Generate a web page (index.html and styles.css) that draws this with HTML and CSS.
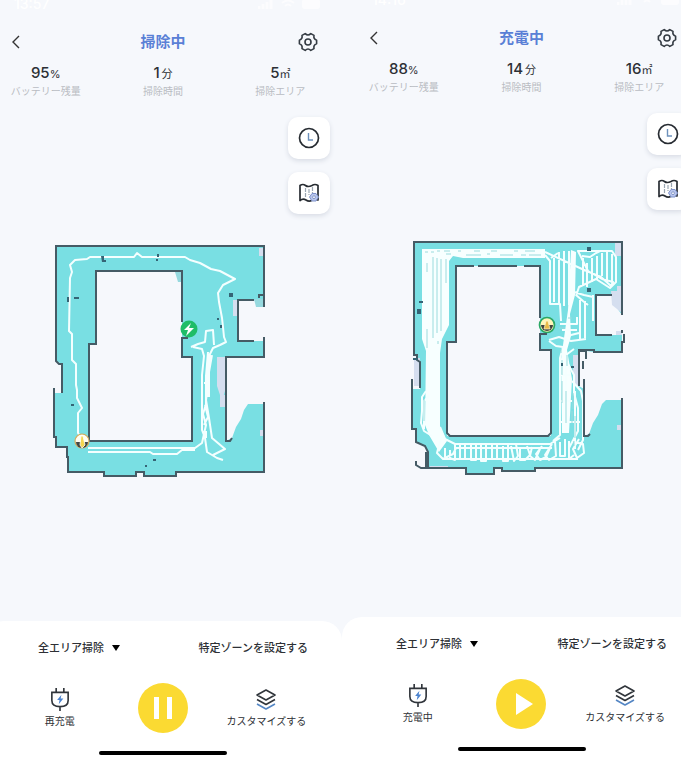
FILE: index.html
```html
<!DOCTYPE html>
<html lang="ja">
<head>
<meta charset="utf-8">
<meta name="viewport" content="width=device-width, initial-scale=1">
<title>ロボット掃除機</title>
<link rel="stylesheet" href="styles.css">
</head>
<body>
<svg class="sprite" aria-hidden="true">
  <symbol id="back" viewBox="0 0 10 16"><path d="M8 2 2 8l6 6" fill="none" stroke="#333" stroke-width="1.4"/></symbol>
  <symbol id="gear" viewBox="0 0 20 20"><g fill="none" stroke="#333a42" stroke-width="1.600" stroke-linejoin="round"><path d="M12.800 1.600 16 3.400Q15.200 7 18.600 8.200V11.800Q15.200 13 16 16.600L12.800 18.400Q10 15.600 7.200 18.400L4 16.600Q4.800 13 1.400 11.800V8.200Q4.800 7 4 3.400L7.200 1.600Q10 4.400 12.800 1.600Z"/><circle cx="10" cy="10" r="3"/></g></symbol>
  <symbol id="clock" viewBox="0 0 22 22"><circle cx="11" cy="11" r="9.5" fill="none" stroke="#272c32" stroke-width="1.7"/><path d="M10.5 6v7H15" fill="none" stroke="#6d91bc" stroke-width="1.4"/></symbol>
  <symbol id="map" viewBox="0 0 22 22"><path d="M2 3.5Q5 1.5 7.5 3.5T14 3.5Q17 1.5 20 3.5V18Q17 16.5 14 18.3 11 20 8 18 5 16 2 18.5Z" fill="none" stroke="#272c32" stroke-width="1.7" stroke-linejoin="round"/><path d="M7.5 6v9M11 7v6M14.500 5v6" stroke="#9ba7b3" stroke-width="1.2" stroke-dasharray="4 1"/><path d="m14 11.500h4l2.500 3.500-2.500 4h-4l-2.500-4z" fill="#b9c6ee" stroke="#7f93cb"/><circle cx="16" cy="15.200" r="1.400" fill="#fff" stroke="#7186bd" stroke-width=".8"/></symbol>
  <symbol id="plug" viewBox="0 0 20 24"><path d="M6 0v5M14 0v5M1.500 4.500h17V13q0 6.500-8.500 6.500T1.500 13ZM10 19.500V24" fill="none" stroke="#30353b" stroke-width="1.700"/><path d="m11.500 7-4.500 5.500h2.500l-.8 4.500 4.800-6h-2.800z" fill="#4b83cf"/></symbol>
  <symbol id="layers" viewBox="0 0 22 22"><g fill="none" stroke="#30353b" stroke-width="1.600" stroke-linejoin="round"><path d="m11 1.500 9 5-9 5-9-5Z"/><path d="m2 11 9 5 9-5"/><path d="m2 15.500 9 5 9-5" stroke="#5486c4"/></g></symbol>
  <symbol id="signals" viewBox="0 0 64 12"><path d="M1 11V8M5 11V6M9 11V4M13 11V2" stroke="#fff" stroke-width="3"/><path d="M24 5q6-5 12 0M27 8q3-3 6 0" fill="none" stroke="#fff" stroke-width="2"/><rect x="44" y="1" width="18" height="10" rx="3" fill="#fff"/></symbol>
</svg>

<main class="board">
  <section class="pane pane-left">
    <div class="screen">
      <div class="status"><span>13:57</span><svg class="signals" aria-hidden="true"><use href="#signals"/></svg></div>
      <header class="nav">
        <button class="icon-button" aria-label="戻る"><svg class="icon-back"><use href="#back"/></svg></button>
        <h1>掃除中</h1>
        <button class="icon-button" aria-label="設定"><svg class="icon-gear"><use href="#gear"/></svg></button>
      </header>
      <dl class="stats">
        <div><dt>バッテリー残量</dt><dd>95<small>%</small></dd></div>
        <div><dt>掃除時間</dt><dd>1<small class="spaced">分</small></dd></div>
        <div><dt>掃除エリア</dt><dd>5<small>㎡</small></dd></div>
      </dl>
      <div class="floor">
        <svg class="plan" viewBox="-16 110 358 511" role="img" aria-label="掃除マップ">
          <path class="area" fill-rule="evenodd" d="M56 246H264V357H226V441L232 438 236 427 241 419 244 410 248 404H264V472H176V476H144V472H136V476H104V472H68V457H67V447H56V437H54V393H62V364L56 361ZM96 271V344H89V441H192V357H182V271ZM238 300V341H264V307L254 300Z"/>
          <path class="haze" d="M259 248h4v8h-4zM217 357h8v34l-3 10-5-15zM233 300h4v16h-4zM220 395h5v12h-5zM260 430h3v6h-3z"/>
          <path class="shade" d="M175 272h7v10h-4zM254 299h9v8h-7z"/>
          <path class="track" d="M83 440 78 433V413L82 408 77 398V390L76 385V364L72 360V334L69 331 70 278 72 272 70 265 75 260 87 259 90 257H134L137 253 142 257H185L190 260 200 263 211 269 220 271 235 279 223 285 218 293 219 302 222 318 223 327 224 337 226 342 220 345 213 348 209 356 208 385 206 400 209 418 212 438 225 449 213 455M191 347 198 344 205 342 206 331 213 330 214 345M193 347 202 349 204 356 202 375V430L205 438 207 452 217 458 223 460M208 352 206 376V404L203 414 206 425 202 443 195 448H88M88 452H150L153 454H177L182 450H195M204 383H209M205 405 208 417 204 425"/>
          <path class="track wide" d="M211 355 208 372V397M205 431V438"/>
          <path class="wall" d="M62 393V364H59L56 361V246H264V295H259V298M264 295V307M254 300H238V341H254M264 337V357H226V441H230L232 438M264 402V472H176V476H144V472H136V476H104V472H68V457H67V447H56V437H54V388M182 322V271H96V344H89V441H192V357H182V338H188"/>
          <path class="spot" d="M101 256h3v4h2v2h-4zM157 254h2v3h-2zM156 259h2v2h-2zM74 297h5v2h-5zM67 297h2v5h-2zM229 293h4v4h-4zM217 318h2v2h-2zM220 325h2v3h-2zM71 404h3v2h-3zM153 459h3v2h-3zM145 465h2v2h-2z"/>
          <circle cx="189" cy="329" r="8.500" fill="#1fbd67"/><path d="m191 323-7 7h4l-2 6 8-8h-5z" fill="#fff"/>
          <circle cx="82" cy="441" r="7" fill="#fffdf3" stroke="#d4a957" stroke-width="1.200"/><path d="M76 442h12a6 6 0 0 1-12 0Z" fill="#424744"/><path d="m80 445 1-9h2l2 9-3 3z" fill="#f4d64e" stroke="#fff" stroke-width=".8"/>
        </svg>
        <div class="tools">
          <button aria-label="予約"><svg><use href="#clock"/></svg></button>
          <button aria-label="マップ管理"><svg><use href="#map"/></svg></button>
        </div>
      </div>
      <div class="sheet">
        <div class="modes">
          <label class="mode"><select aria-label="掃除モード"><option>全エリア掃除</option></select><svg class="caret" viewBox="0 0 8 6" aria-hidden="true"><path d="M0 0h8L4 6z"/></svg></label>
          <button class="zone">特定ゾーンを設定する</button>
        </div>
        <div class="actions">
          <button class="action"><svg class="icon-plug"><use href="#plug"/></svg><span>再充電</span></button>
          <button class="primary" aria-label="一時停止"><svg viewBox="0 0 50 50"><path d="M18.500 14v22M31.500 14v22" stroke="#fff" stroke-width="5"/></svg></button>
          <button class="action"><svg class="icon-layers"><use href="#layers"/></svg><span>カスタマイズする</span></button>
        </div>
        <div class="home-bar"></div>
      </div>
    </div>
  </section>

  <section class="pane pane-right">
    <div class="screen">
      <div class="status"><span>14:16</span><svg class="signals" aria-hidden="true"><use href="#signals"/></svg></div>
      <header class="nav">
        <button class="icon-button" aria-label="戻る"><svg class="icon-back"><use href="#back"/></svg></button>
        <h1>充電中</h1>
        <button class="icon-button" aria-label="設定"><svg class="icon-gear"><use href="#gear"/></svg></button>
      </header>
      <dl class="stats">
        <div><dt>バッテリー残量</dt><dd>88<small>%</small></dd></div>
        <div><dt>掃除時間</dt><dd>14<small class="spaced">分</small></dd></div>
        <div><dt>掃除エリア</dt><dd>16<small>㎡</small></dd></div>
      </dl>
      <div class="floor">
        <svg class="plan" viewBox="342 105 359 511" role="img" aria-label="掃除マップ">
          <path class="area" fill-rule="evenodd" d="M414 241H622V351H594L579 349V385L584 388V435L589 433 593 422 598 414 602 403 606 399H622V467H535V470H502V467H494V473H466V467H428V450L425 445 416 441V428H412V388H420V360L414 353ZM456 265V341H447V435H551V349H540V265ZM596 294V334H622V314L612 300V294Z"/>
          <path class="haze" d="M414 357h6v28h-6zM573 354h6v31h-6zM615 242h6v13h-6zM611 290h11v22l-10-8zM617 285h5v8h-5zM616 330h6v4h-6zM617 424h4v5h-4zM430 465h18v2h-18z"/>
          <path class="swept" d="M422 248H545V257H463L453 255 449 260V324L442 338 440 352V426L447 440 439 451 429 434 425 424 426 350 422 338Z"/>
          <path class="gap" d="M433 256V337M437 257V332M441 258V330M446 258V282M427 262V271M427 328V347M438 340V343M425 251H428M431 251H434M437 250H440M444 250H450M446 253H451M458 250H461M474 250H480M466 254H481M491 250H497M487 253H490M500 254H513M514 250H518M521 254H526M525 250H535M529 254H541"/>
          <path class="swept" d="M571 249 576 251 575 294 570 313 571 335 567 349 572 378 569 432H562L561 358 564 337 568 309Z"/>
          <path class="track" d="M426 390 422 396V410L421 422 424 430 432 435M429 395 424 400V428M545 251 582 268 601 276 611 285 613 281 602 278 588 270 578 250H612L616 256V281L610 287 596 278 579 286 576 295M545 254 550 260V303H560L561 320M554 257V301M559 251V302M564 250V305M569 250V304M583 257V285M587 262V286M592 257V281M597 255V278M602 252V275M607 251V279M612 253V282M582 255 590 256 596 252 600 250M574 291 584 294 593 296M576 294 583 300 588 304M580 299V340M585 300V337M593 294V320M549 339 559 336 571 340 586 338M549 340 556 345 563 346M560 323H577V316M562 329H577M567 335 579 332M558 252 551 257M563 346 560 357V434L553 440M574 348 566 354V430M572 380 581 390 583 400V439L578 449M567 361 574 374V392L578 407V430L569 447M575 390V448M561 374H570M561 400H572M559 421H580M440 426 445 438 455 443H550L560 437M442 436 439 444 437 452 443 458 453 453 456 447H552M445 447V456M450 449V457L455 459V443M460 444V458H465V444M471 444V459H476V443M481 444V460H486V443M492 444V458H497V444M503 445V460H508V444M511 445 514 460 518 455 516 443M520 446V459H525L530 454 527 445M532 446 530 455 535 459 540 448M542 445 536 453 540 459 546 456 550 447M552 443 545 454 549 459 556 455 555 440M560 441V455H565V438M569 440V458L574 454M579 438 573 448 577 457 584 452 583 443 574 441M443 458H578"/>
          <path class="gap" d="M562 359V374M562 380V402M567 354V365M566 390V422M573 392V408M572 410V422M575 415V437M574 440V445M424 398V420M561 348V352M559 327H565M568 317H572"/>
          <path class="wall" d="M420 387V361L417 359V354H414V241H622V314M612 294H596V334H612M622 329V332M624 333V341H622V351H594V349H579V385M583 360V368M584 378V435H588L590 433M622 397V467H535V470H502V467H494V473H466V467H421L416 464V460M428 467V451L425 445 416 441V428H412V378M540 317V265H524M517 265H478M474 265H456V341H447V432L450 435H548L551 432V349H540V333H547M580 350H586V358"/>
          <path class="wall thick" d="M427 451V467"/>
          <path class="spot" d="M419 300h4v2h-4zM417 308h4v5h-4zM587 246h4v4h-4zM587 287h4v4h-4zM561 362h2v3h-2zM571 365h3v2h-3zM413 357h5v2h-5z"/>
          <circle cx="547" cy="324" r="7.500" fill="#fff5b8" stroke="#2ba866" stroke-width="1.700"/><path d="M541 324h12a6 6 0 0 1-12 0Z" fill="#41443e"/><path d="m544 328 2-8h2l2 8z" fill="#e9ba47" stroke="#fff6ce" stroke-width=".7"/>
        </svg>
        <div class="tools">
          <button aria-label="予約"><svg><use href="#clock"/></svg></button>
          <button aria-label="マップ管理"><svg><use href="#map"/></svg></button>
        </div>
      </div>
      <div class="sheet">
        <div class="modes">
          <label class="mode"><select aria-label="掃除モード"><option>全エリア掃除</option></select><svg class="caret" viewBox="0 0 8 6" aria-hidden="true"><path d="M0 0h8L4 6z"/></svg></label>
          <button class="zone">特定ゾーンを設定する</button>
        </div>
        <div class="actions">
          <button class="action"><svg class="icon-plug"><use href="#plug"/></svg><span>充電中</span></button>
          <button class="primary" aria-label="開始"><svg viewBox="0 0 50 50"><path d="M20 14v22l17-11z" fill="#fff"/></svg></button>
          <button class="action"><svg class="icon-layers"><use href="#layers"/></svg><span>カスタマイズする</span></button>
        </div>
        <div class="home-bar"></div>
      </div>
    </div>
  </section>
</main>
</body>
</html>
```
FILE: styles.css
```css
* { box-sizing: border-box; }

body {
  margin: 0;
  background: #f6f8fc;
  color: #2d3035;
  font-family: Inter, "Noto Sans CJK JP", sans-serif;
}

svg { display: block; }

button,
select {
  margin: 0;
  padding: 0;
  border: 0;
  background: none;
  color: inherit;
  font: inherit;
  cursor: pointer;
}

.sprite { position: absolute; width: 0; height: 0; }

.board {
  display: grid;
  grid-template-columns: 342fr 339fr;
  height: 100vh;
  min-height: 760px;
  overflow: hidden;
}

.pane { display: flex; min-width: 0; }
.screen { flex: 1; display: flex; flex-direction: column; min-width: 0; }
.pane-left .screen { margin-left: -16px; }
.pane-right .screen { margin-right: -20px; margin-top: -4px; }

.status {
  display: flex;
  justify-content: space-between;
  height: 24px;
  padding: 0 20px 0 30px;
  color: #fff;
  font-size: 14px;
  font-weight: 500;
  line-height: 8px;
}
.signals { width: 64px; height: 12px; margin-top: -2px; opacity: 0.7; }

.nav {
  display: flex;
  align-items: center;
  justify-content: space-between;
  height: 36px;
  padding: 0 24px;
}
.nav h1 {
  margin: 0;
  color: #5a80d6;
  font-size: 15px;
  font-weight: 700;
  line-height: 20px;
}
.icon-button { display: flex; align-items: center; width: 20px; height: 24px; }
.icon-back { width: 10px; height: 16px; margin-left: 3px; }
.icon-gear { width: 20px; height: 20px; }

.stats {
  display: grid;
  grid-template-columns: repeat(3, 1fr);
  margin: 0;
  padding: 3px 3px 11px;
  text-align: center;
}
.stats div { display: flex; flex-direction: column-reverse; }
.stats dt { color: #b9bcc2; font-size: 10px; line-height: 15px; }
.stats dd { margin: 0; font-size: 15px; font-weight: 500; line-height: 20px; }
.stats small { font-size: 11px; font-weight: 400; }
.stats .spaced { margin-left: 2px; }

.floor { position: relative; }
.plan { width: 100%; height: 511px; }
.area { fill: #79dfe3; }
.haze { fill: #d5deef; }
.shade { fill: #96d9df; }
.swept { fill: #f7ffff; }
.track { fill: none; stroke: #f4ffff; stroke-width: 2; stroke-linejoin: round; }
.track.wide { stroke-width: 4; }
.gap { fill: none; stroke: #9adbdd; stroke-width: 1; }
.wall { fill: none; stroke: #455b65; stroke-width: 2; }
.wall.thick { stroke-width: 4; }
.spot { fill: #356475; }

.tools {
  position: absolute;
  top: 7px;
  right: 12px;
  display: grid;
  gap: 13px;
}
.tools button {
  display: grid;
  place-items: center;
  width: 42px;
  height: 42px;
  border-radius: 10px;
  background: #fff;
  box-shadow: 0 2px 5px #d8dce5;
}
.tools svg { width: 22px; height: 22px; }

.sheet {
  flex: 1;
  padding-top: 17px;
  border-radius: 20px 20px 0 0;
  background: #fff;
}
.modes {
  display: flex;
  align-items: center;
  justify-content: space-between;
  height: 20px;
  padding: 0 34px 0 54px;
  font-size: 11px;
  font-weight: 500;
  line-height: 20px;
}
.mode { display: flex; align-items: center; gap: 8px; }
.mode select { appearance: none; }
.caret { width: 8px; height: 6px; }

.actions {
  display: grid;
  grid-template-columns: repeat(3, 1fr);
  align-items: center;
  justify-items: center;
  margin-top: 25px;
  padding: 0 24px;
}
.action {
  display: flex;
  flex-direction: column;
  align-items: center;
  gap: 2px;
  font-size: 10px;
  line-height: 16px;
  white-space: nowrap;
}
.action svg { height: 23px; }
.icon-plug { width: 20px; }
.icon-layers { width: 22px; }
.primary {
  width: 50px;
  height: 50px;
  border-radius: 50%;
  background: #fbda32;
}
.primary svg { width: 50px; height: 50px; }

.home-bar {
  width: 128px;
  height: 4px;
  margin: 18px auto 0;
  border-radius: 2px;
  background: #000;
}
```
